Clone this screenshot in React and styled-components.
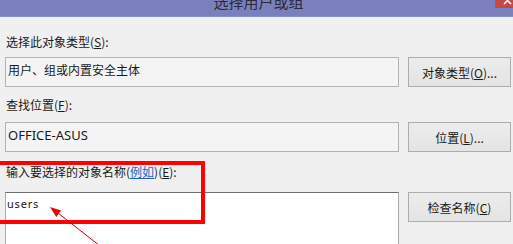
import React from "react";
import styled, { createGlobalStyle } from "styled-components";

const GlobalStyle = createGlobalStyle`
  html, body {
    margin: 0;
    padding: 0;
    background: #f0f0f0;
    overflow: hidden;
  }
  body {
    font-family: "Noto Sans", "Noto Sans CJK SC", sans-serif;
    font-size: 12px;
    color: #1a1a1a;
  }
`;

const Window = styled.div`
  position: relative;
  width: 513px;
  height: 244px;
  overflow: hidden;
  background: #f0f0f0;
`;

const TitleBar = styled.div`
  position: relative;
  height: 16px;
  background: #7a80bc;
  border-bottom: 1px solid #8a90c6;
  display: flex;
  justify-content: center;
  overflow: hidden;
`;

const Title = styled.span`
  font-family: "Noto Sans CJK SC", sans-serif;
  font-size: 15px;
  line-height: 16px;
  margin-top: -6px;
  margin-left: 4px;
  color: #2a2a3a;
`;

const CloseButton = styled.div`
  position: absolute;
  right: 0;
  top: 0;
  width: 18px;
  height: 8px;
  background: #c64a42;
  display: flex;
  justify-content: flex-end;
  overflow: hidden;
`;

const Body = styled.div`
  display: flex;
  flex-direction: column;
  padding: 0 2px 0 5px;
`;

const Label = styled.div`
  font-family: "Noto Sans CJK SC", sans-serif;
  font-size: 12px;
  line-height: 16px;
  height: 16px;
  padding-left: 1px;
  margin-top: ${(p) => p.$top}px;
  margin-bottom: ${(p) => p.$bottom}px;
  white-space: nowrap;
`;

const Key = styled.span`
  text-decoration: underline;
  text-underline-offset: 1px;
`;

const Link = styled.span`
  color: #1a66c8;
  text-decoration: underline;
  text-underline-offset: 1px;
`;

const Row = styled.div`
  display: flex;
  gap: 9px;
  align-items: flex-start;
`;

const ReadBox = styled.div`
  box-sizing: border-box;
  width: 394px;
  height: 30px;
  border: 1px solid #b2b2b2;
  background: #f4f4f4;
  padding: 4px 0 0 2px;
  font-family: ${(p) =>
    p.$latin ? '"Noto Sans", sans-serif' : '"Noto Sans CJK SC", sans-serif'};
  font-size: ${(p) => (p.$latin ? 13 : 12)}px;
  line-height: 16px;
  white-space: nowrap;
`;

const EntryBox = styled.div`
  box-sizing: border-box;
  width: 394px;
  height: 70px;
  border: 1px solid #abadb3;
  border-top-color: #6f6f6f;
  background: #ffffff;
  padding: 3px 0 0 1px;
  font-family: "Noto Sans", sans-serif;
  font-size: 11px;
  letter-spacing: 0.8px;
  line-height: 16px;
`;

const Button = styled.div`
  box-sizing: border-box;
  width: 103px;
  height: 30px;
  border: 1px solid #acacac;
  background: linear-gradient(#ececec, #e4e4e4);
  display: flex;
  align-items: center;
  justify-content: center;
  font-family: "Noto Sans CJK SC", sans-serif;
  font-size: 12px;
  color: #1a1a1a;
  white-space: nowrap;
`;

const Highlight = styled.div`
  position: absolute;
  left: -4px;
  top: 161px;
  width: 209px;
  height: 63px;
  box-sizing: border-box;
  border: 4px solid #ff0000;
  pointer-events: none;
`;

const Overlay = styled.svg`
  position: absolute;
  left: 0;
  top: 0;
  pointer-events: none;
`;

export default function App() {
  return (
    <>
      <GlobalStyle />
      <Window>
        <TitleBar>
          <Title>选择用户或组</Title>
          <CloseButton>
            <svg width="10" height="8" viewBox="0 0 10 8">
              <path d="M1 -3 L8 4 M8 -3 L1 4" stroke="#ffffff" strokeWidth="1.6" />
            </svg>
          </CloseButton>
        </TitleBar>
        <Body>
          <Label $top={17} $bottom={7}>
            选择此对象类型(<Key>S</Key>):
          </Label>
          <Row>
            <ReadBox>用户、组或内置安全主体</ReadBox>
            <Button>
              对象类型(<Key>O</Key>)...
            </Button>
          </Row>
          <Label $top={10} $bottom={9}>
            查找位置(<Key>F</Key>):
          </Label>
          <Row>
            <ReadBox $latin>OFFICE-ASUS</ReadBox>
            <Button>
              位置(<Key>L</Key>)...
            </Button>
          </Row>
          <Label $top={12} $bottom={12}>
            输入要选择的对象名称(<Link>例如</Link>)(<Key>E</Key>):
          </Label>
          <Row>
            <EntryBox>users</EntryBox>
            <Button>
              检查名称(<Key>C</Key>)
            </Button>
          </Row>
        </Body>
        <Highlight />
        <Overlay width="513" height="244" viewBox="0 0 513 244">
          <line x1="58" y1="213" x2="100" y2="246" stroke="#c40000" strokeWidth="1" />
          <polygon points="50,207 56.3,217 61.1,210.5" fill="#ee0000" />
        </Overlay>
      </Window>
    </>
  );
}
